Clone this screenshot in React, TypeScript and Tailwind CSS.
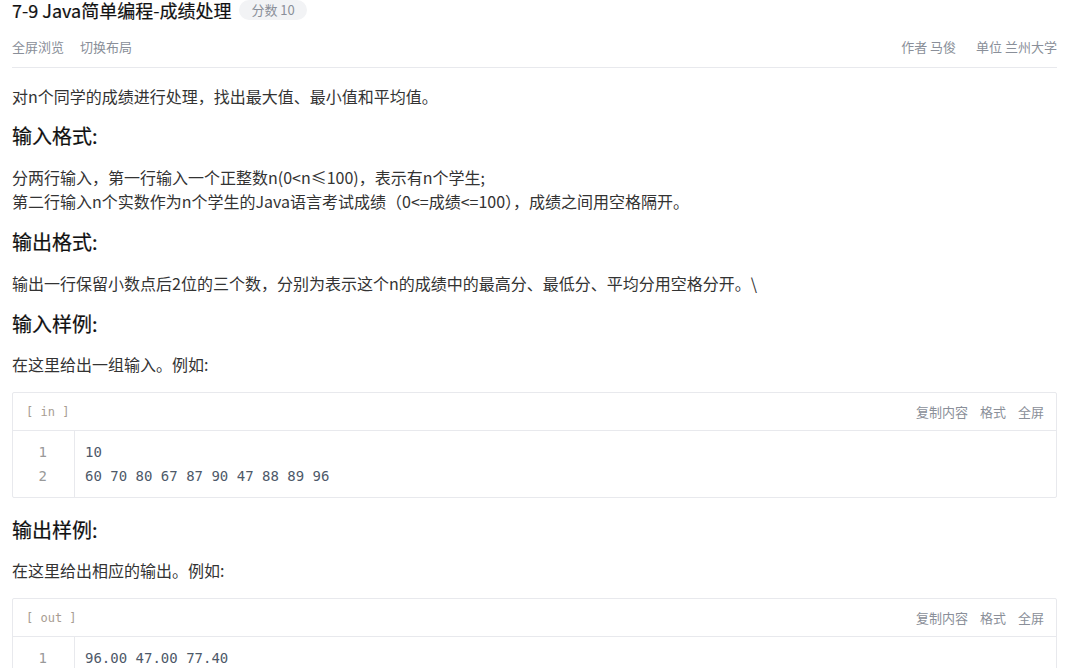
import React from "react";

const sans = { fontFamily: '"Noto Sans CJK SC", "Noto Sans", sans-serif' };
const mono = { fontFamily: '"DejaVu Sans Mono", "Noto Sans CJK SC", monospace' };
const medium = { WebkitTextStroke: "0.2px #111" } as React.CSSProperties;

function CodeBox({ label, lines }: { label: string; lines: string[] }) {
  return (
    <div className="border border-[#e8e9ed] rounded-[2px]">
      <div className="h-[38px] flex items-center justify-between pl-[13px] pr-[12px] border-b border-[#e8e9ed]">
        <span className="text-[12px] text-[#a89d92]" style={mono}>
          [ {label} ]
        </span>
        <div className="flex gap-3 text-[13px] text-[#8a8f99]">
          <span>复制内容</span>
          <span>格式</span>
          <span>全屏</span>
        </div>
      </div>
      <div className="flex">
        <div className="w-[62px] border-r border-[#e8e9ed] text-right pr-[27px] py-[9px] text-[14px] leading-[24px] text-[#999]" style={mono}>
          {lines.map((_, i) => (
            <div key={i}>{i + 1}</div>
          ))}
        </div>
        <div className="pl-[10px] py-[9px] text-[14px] leading-[24px] text-[#4e5969]" style={mono}>
          {lines.map((l, i) => (
            <div key={i}>{l}</div>
          ))}
        </div>
      </div>
    </div>
  );
}

const H = ({ children, className }: { children: React.ReactNode; className: string }) => (
  <h2 className={"text-[20px] leading-[28px] font-normal text-[#111] " + className} style={medium}>
    {children}
  </h2>
);

export default function App() {
  return (
    <div className="bg-white w-[1075px] h-[668px] overflow-hidden pl-3 pr-[18px]" style={sans}>
      <div className="flex items-center gap-2 h-[20px]">
        <h1 className="text-[18px] font-normal text-[#111] leading-[20px]" style={medium}>7-9 Java简单编程-成绩处理</h1>
        <span className="h-[20px] flex items-center rounded-full bg-[#f2f3f5] px-3 text-[13px] text-[#8a8f99]">分数 10</span>
      </div>
      <div className="flex justify-between items-center h-[20px] mt-[17px] text-[13px] text-[#8a8f99]">
        <div className="flex gap-4">
          <span>全屏浏览</span>
          <span>切换布局</span>
        </div>
        <div className="flex gap-5">
          <span>作者 马俊</span>
          <span>单位 兰州大学</span>
        </div>
      </div>
      <div className="border-b border-[#e8e9ed] mt-[10px]" />
      <div className="text-[16px] leading-[24px] text-[#333] mt-[16px]">
        <p>对n个同学的成绩进行处理，找出最大值、最小值和平均值。</p>
        <H className="mt-[14px]">输入格式:</H>
        <p className="mt-[15px]">
          分两行输入，第一行输入一个正整数n(0&lt;n≤100)，表示有n个学生;
          <br />
          第二行输入n个实数作为n个学生的Java语言考试成绩（0&lt;=成绩&lt;=100），成绩之间用空格隔开。
        </p>
        <H className="mt-[15px]">输出格式:</H>
        <p className="mt-[15px]">输出一行保留小数点后2位的三个数，分别为表示这个n的成绩中的最高分、最低分、平均分用空格分开。\</p>
        <H className="mt-[15px]">输入样例:</H>
        <p className="mt-[14px]">在这里给出一组输入。例如:</p>
        <div className="mt-[16px]">
          <CodeBox label="in" lines={["10", "60 70 80 67 87 90 47 88 89 96"]} />
        </div>
        <H className="mt-[18px]">输出样例:</H>
        <p className="mt-[14px]">在这里给出相应的输出。例如:</p>
        <div className="mt-[16px]">
          <CodeBox label="out" lines={["96.00 47.00 77.40"]} />
        </div>
      </div>
    </div>
  );
}
